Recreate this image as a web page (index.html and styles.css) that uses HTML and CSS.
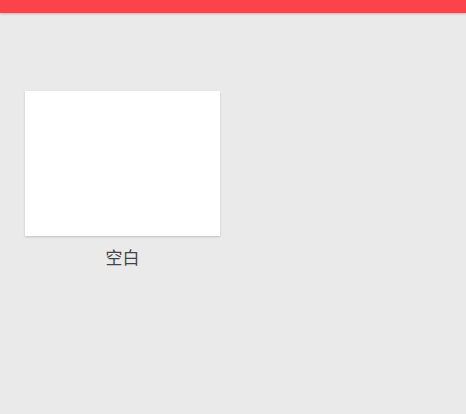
FILE: index.html
```html
<!DOCTYPE html>
<html>
<head>
<meta charset="utf-8">
<link rel="stylesheet" href="styles.css">
</head>
<body>
<div class="topbar"></div>
<main class="content">
  <div class="item">
    <div class="card"></div>
    <div class="label">空白</div>
  </div>
</main>
</body>
</html>
```
FILE: styles.css
```css
html, body {
  margin: 0;
  padding: 0;
  background: #eaeaea;
  width: 466px;
  height: 414px;
  overflow: hidden;
  font-family: "Noto Sans CJK SC", "Roboto", sans-serif;
}
.topbar {
  height: 13px;
  background: #fc424a;
  box-shadow: 0 1px 2px rgba(200, 40, 40, 0.35);
}
.content {
  padding: 78px 0 0 25px;
}
.item {
  width: 195px;
  display: flex;
  flex-direction: column;
  align-items: center;
}
.card {
  width: 195px;
  height: 145px;
  background: #ffffff;
  box-shadow: 0 1px 2px rgba(0, 0, 0, 0.18);
}
.label {
  margin-top: 9px;
  font-size: 17px;
  line-height: 24px;
  color: #444444;
}
```
